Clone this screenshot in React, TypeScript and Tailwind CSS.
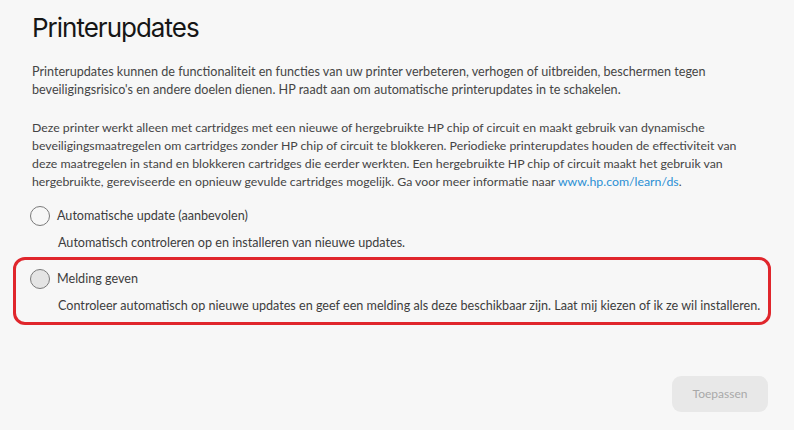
function Radio({ hover = false }: { hover?: boolean }) {
  return (
    <span
      className={`-ml-[2px] h-[20px] w-[20px] shrink-0 rounded-full border-[1.5px] border-[#7a7a7a] ${
        hover ? "bg-[#e4e4e4]" : "bg-[#f7f7f7]"
      }`}
    />
  );
}

function Option({
  label,
  description,
  hover,
}: {
  label: string;
  description: string;
  hover?: boolean;
}) {
  return (
    <div className="flex flex-col">
      <label className="flex h-[20px] items-center gap-[7px]">
        <Radio hover={hover} />
        <span className="text-[12.6px] text-[#3d3d3d]">{label}</span>
      </label>
      <p className="mt-[7px] pl-[26px] text-[12.6px] leading-[20px] text-[#3d3d3d]">{description}</p>
    </div>
  );
}

export default function App() {
  return (
    <div
      className="flex h-[430px] w-[794px] flex-col bg-[#f7f7f7] pl-8 pr-[42px] pt-[6px]"
      style={{ fontFamily: "Lato, 'Noto Sans', sans-serif" }}
    >
      <h1
        className="text-[26px] leading-[44px] tracking-[-1px] text-[#161616]"
        style={{ fontFamily: "Inter, 'Noto Sans', sans-serif" }}
      >
        Printerupdates
      </h1>

      <p className="mt-[13px] text-[12.6px] leading-[18px] text-[#454545]">
        Printerupdates kunnen de functionaliteit en functies van uw printer verbeteren, verhogen of
        uitbreiden, beschermen tegen beveiligingsrisico's en andere doelen dienen. HP raadt aan om
        automatische printerupdates in te schakelen.
      </p>

      <p className="mt-[20px] whitespace-nowrap text-[12.3px] leading-[18px] text-[#454545]">
        Deze printer werkt alleen met cartridges met een nieuwe of hergebruikte HP chip of circuit en
        maakt gebruik van dynamische
        <br />
        beveiligingsmaatregelen om cartridges zonder HP chip of circuit te blokkeren. Periodieke
        printerupdates houden de effectiviteit van
        <br />
        deze maatregelen in stand en blokkeren cartridges die eerder werkten. Een hergebruikte HP chip
        of circuit maakt het gebruik van
        <br />
        hergebruikte, gereviseerde en opnieuw gevulde cartridges mogelijk. Ga voor meer informatie naar{" "}
        <a className="text-[#2a8fd4]">www.hp.com/learn/ds</a>.
      </p>

      <div className="mt-[15px]">
        <Option
          label="Automatische update (aanbevolen)"
          description="Automatisch controleren op en installeren van nieuwe updates."
        />
      </div>

      <div className="-mx-[19px] mt-[4px] rounded-[12px] border-[3px] border-[#e0262c] pb-[6px] pl-4 pt-[9px]">
        <Option
          hover
          label="Melding geven"
          description="Controleer automatisch op nieuwe updates en geef een melding als deze beschikbaar zijn. Laat mij kiezen of ik ze wil installeren."
        />
      </div>

      <div className="mt-[51px] flex justify-end">
        <button className="-mr-[16px] h-[36px] w-[96px] rounded-[9px] bg-[#e8e8e8] text-[12px] text-[#a8a8a8]">
          Toepassen
        </button>
      </div>
    </div>
  );
}
